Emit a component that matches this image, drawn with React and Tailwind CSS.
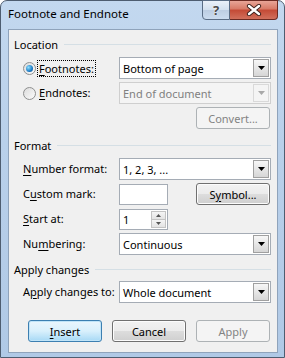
import React from "react";

const F = { fontFamily: '"Segoe UI","Noto Sans",sans-serif' };

function U({ children }) {
  return <span className="underline underline-offset-2 decoration-1">{children}</span>;
}

function Arrow({ disabled }) {
  return (
    <div
      className={`w-[16px] h-[18px] my-auto mr-[1px] flex items-center justify-center border ${
        disabled ? "border-[#d9d9d9] bg-[#f4f4f4]" : "border-[#a0a0a0] bg-gradient-to-b from-[#f7f7f7] to-[#d6d6d6]"
      }`}
    >
      <svg width="7" height="4" viewBox="0 0 7 4">
        <path d="M0 0h7L3.5 4z" fill={disabled ? "#a8a8a8" : "#000"} />
      </svg>
    </div>
  );
}

function Combo({ value, disabled, className = "" }) {
  return (
    <div
      className={`flex h-[22px] border ${
        disabled ? "border-[#cfcfcf] bg-[#f4f4f4] text-[#808080]" : "border-[#a5acb5] bg-white text-black"
      } ${className}`}
    >
      <div className="flex-1 pl-[3px] flex items-center leading-none whitespace-nowrap">{value}</div>
      <Arrow disabled={disabled} />
    </div>
  );
}

function Btn({ children, kind = "normal", className = "" }) {
  const base = "w-[74px] h-[22px] rounded-[3px] border flex items-center justify-center leading-none whitespace-nowrap";
  if (kind === "disabled")
    return <div className={`${base} border-[#adb2b5] bg-[#f4f4f4] text-[#838383] ${className}`}>{children}</div>;
  if (kind === "default")
    return (
      <div className={`${base} border-[#3c7fb1] bg-gradient-to-b from-[#eaf6fd] via-[#d9f0fc] to-[#a7d9f5] shadow-[inset_0_0_0_1px_#c0e4f8] ${className}`}>
        {children}
      </div>
    );
  return (
    <div className={`${base} border-[#707070] bg-[linear-gradient(to_bottom,#f2f2f2_0%,#ebebeb_50%,#dddddd_50%,#cfcfcf_100%)] shadow-[inset_0_0_0_1px_#fcfcfc] ${className}`}>
      {children}
    </div>
  );
}

function Header({ children }) {
  return (
    <div className="flex items-center h-[16px] pl-[5px] pr-[6px]">
      <span className="leading-none whitespace-nowrap">{children}</span>
      <div className="flex-1 h-px bg-[#d5dfe5] ml-[6px]" />
    </div>
  );
}

function Radio({ checked }) {
  return (
    <div className="w-[13px] h-[13px] shrink-0 rounded-full border border-[#8e8f8f] bg-gradient-to-br from-[#dcdcdc] to-[#fbfbfb] flex items-center justify-center">
      {checked && (
        <div className="w-[7px] h-[7px] rounded-full bg-[radial-gradient(circle_at_35%_35%,#8ee0ff,#1c7bc4_60%,#0b4d8e)]" />
      )}
    </div>
  );
}

function Row({ label, children, className = "" }) {
  return (
    <div className={`flex items-center h-[22px] pr-[6px] ${className}`}>
      <div className="w-[110px] shrink-0 pl-[14px] whitespace-nowrap">{label}</div>
      <div className="flex-1 flex items-center">{children}</div>
    </div>
  );
}

export default function App() {
  return (
    <div
      style={F}
      className="w-[285px] h-[358px] text-[11px] text-black relative rounded-t-[7px] border border-[#4e5d70] bg-[linear-gradient(to_bottom,#c3d8ef,#b9d0ea_40%,#b0c9e6)] flex flex-col"
    >
      {/* title bar */}
      <div className="h-[28px] flex items-start relative">
        <div className="pl-[7px] pt-[7px] leading-none text-[11.5px] whitespace-nowrap">Footnote and Endnote</div>
        <div className="absolute right-[6px] top-[-1px] flex h-[20px]">
          <div className="w-[28px] h-[20px] border border-[#5a6d85] rounded-bl-[4px] bg-[linear-gradient(to_bottom,#eaf1f9,#d3e0ee_50%,#bccde2_50%,#cbdcef)] flex items-center justify-center text-[#4a4a4a] text-[13px] font-bold leading-none [text-shadow:0_0_2px_#fff]">
            ?
          </div>
          <div className="w-[48px] h-[20px] border border-[#6b2a22] border-l-0 rounded-br-[4px] bg-[linear-gradient(to_bottom,#e8a597,#d77966_45%,#c44a35_50%,#d1705c)] flex items-center justify-center">
            <svg width="16" height="12" viewBox="0 0 16 12">
              <path d="M3 2l10 8M13 2L3 10" stroke="#3a1f1a" strokeWidth="4.2" strokeLinecap="round" />
              <path d="M3 2l10 8M13 2L3 10" stroke="#fff" strokeWidth="2.4" strokeLinecap="round" />
            </svg>
          </div>
        </div>
      </div>
      {/* client */}
      <div className="ml-[7px] mr-[6px] h-[324px] border border-[#8fa3bb] bg-[#f0f0f0] flex flex-col">
        <div className="mt-[6px]">
          <Header>Location</Header>
        </div>
        <div className="flex items-center h-[22px] pr-[6px] mt-[5px]">
          <div className="w-[110px] shrink-0 pl-[14px] flex items-center whitespace-nowrap">
            <Radio checked />
            <span className="ml-[2px] px-[1px] outline outline-1 outline-dotted outline-black leading-[15px]">
              <U>F</U>ootnotes:
            </span>
          </div>
          <Combo value="Bottom of page" className="flex-1" />
        </div>
        <div className="flex items-center h-[22px] pr-[6px] mt-[3px]">
          <div className="w-[110px] shrink-0 pl-[14px] flex items-center whitespace-nowrap">
            <Radio />
            <span className="ml-[3px]">
              <U>E</U>ndnotes:
            </span>
          </div>
          <Combo value="End of document" disabled className="flex-1" />
        </div>
        <div className="flex justify-end pr-[7px] mt-[3px]">
          <Btn kind="disabled">Convert...</Btn>
        </div>

        <div className="mt-[8px]">
          <Header>Format</Header>
        </div>
        <Row className="mt-[5px]" label={<><U>N</U>umber format:</>}>
          <Combo value="1, 2, 3, ..." className="flex-1" />
        </Row>
        <div className="flex items-center h-[22px] pr-[7px] mt-[3px]">
          <div className="w-[110px] shrink-0 pl-[14px] whitespace-nowrap">
            C<U>u</U>stom mark:
          </div>
          <div className="w-[49px] h-[21px] border border-[#a5acb5] bg-white" />
          <div className="flex-1" />
          <Btn>
            S<U>y</U>mbol...
          </Btn>
        </div>
        <Row className="mt-[3px]" label={<><U>S</U>tart at:</>}>
          <div className="w-[49px] h-[21px] border border-[#a5acb5] bg-white flex items-center">
            <span className="flex-1 pl-[3px] leading-none">1</span>
            <div className="w-[15px] h-[17px] mr-[1px] flex flex-col">
              <div className="flex-1 border border-[#c3c3c3] bg-gradient-to-b from-[#f5f5f5] to-[#e3e3e3] flex items-center justify-center">
                <svg width="5" height="3" viewBox="0 0 5 3"><path d="M0 3h5L2.5 0z" fill="#555" /></svg>
              </div>
              <div className="flex-1 border border-t-0 border-[#c3c3c3] bg-gradient-to-b from-[#f5f5f5] to-[#e3e3e3] flex items-center justify-center">
                <svg width="5" height="3" viewBox="0 0 5 3"><path d="M0 0h5L2.5 3z" fill="#555" /></svg>
              </div>
            </div>
          </div>
        </Row>
        <Row className="mt-[3px]" label={<>Nu<U>m</U>bering:</>}>
          <Combo value="Continuous" className="flex-1" />
        </Row>

        <div className="mt-[6px]">
          <Header>Apply changes</Header>
        </div>
        <Row className="mt-[4px]" label={<>A<U>p</U>ply changes to:</>}>
          <Combo value="Whole document" className="flex-1" />
        </Row>

        <div className="flex justify-end gap-[10px] pr-[7px] mt-[17px]">
          <Btn kind="default">
            <U>I</U>nsert
          </Btn>
          <Btn>Cancel</Btn>
          <Btn kind="disabled">Apply</Btn>
        </div>
      </div>
    </div>
  );
}
